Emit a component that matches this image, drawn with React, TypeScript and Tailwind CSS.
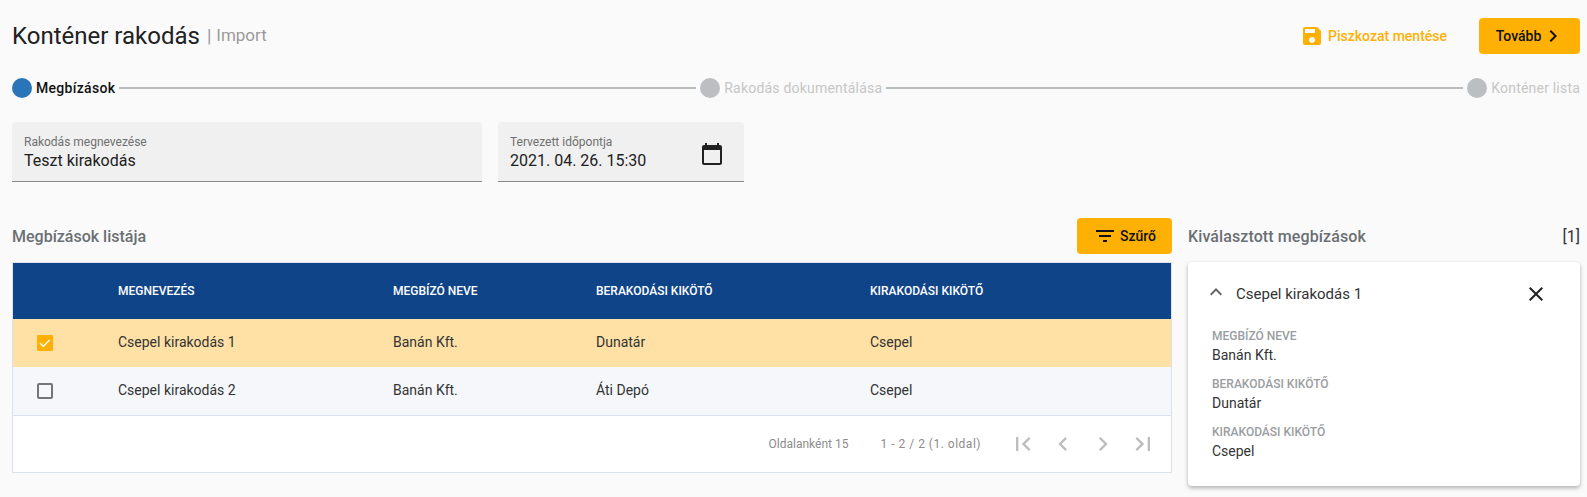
import type { ReactNode } from 'react';

const rows = [
  { name: 'Csepel kirakodás 1', client: 'Banán Kft.', from: 'Dunatár', to: 'Csepel', selected: true },
  { name: 'Csepel kirakodás 2', client: 'Banán Kft.', from: 'Áti Depó', to: 'Csepel', selected: false },
];

const details = [
  { label: 'Megbízó neve', value: 'Banán Kft.' },
  { label: 'Berakodási kikötő', value: 'Dunatár' },
  { label: 'Kirakodási kikötő', value: 'Csepel' },
];

const pagerIcons = [
  'M18.41 16.59L13.82 12l4.59-4.59L17 6l-6 6 6 6zM6 6h2v12H6z',
  'M15.41 7.41L14 6l-6 6 6 6 1.41-1.41L10.83 12z',
  'M10 6L8.59 7.41 13.17 12l-4.58 4.59L10 18l6-6z',
  'M5.59 7.41L10.18 12l-4.59 4.59L7 18l6-6-6-6zM16 6h2v12h-2z',
];

function Icon({ d, className }: { d: string; className: string }) {
  return (
    <svg viewBox="0 0 24 24" fill="currentColor" className={className}>
      <path d={d} />
    </svg>
  );
}

function Field({ label, value, className, children }: { label: string; value: string; className: string; children?: ReactNode }) {
  return (
    <div className={`flex h-[60px] items-center justify-between rounded-t border-b border-[#8a8a8a] bg-[#f0f0f0] pl-3 pr-5 ${className}`}>
      <div className="pt-1">
        <div className="text-xs leading-[15px] text-[#6f6f6f]">{label}</div>
        <div className="text-base leading-[22px] text-[#212121]">{value}</div>
      </div>
      {children}
    </div>
  );
}

function Step({ label, active }: { label: string; active?: boolean }) {
  return (
    <div className="flex items-center gap-1">
      <span className={`h-5 w-5 rounded-full ${active ? 'bg-[#2a75b8]' : 'bg-[#bbbfc2]'}`} />
      <span className={`text-sm ${active ? 'font-medium tracking-[0.3px] text-[#111111]' : 'tracking-[0.2px] text-[#c6c6c6]'}`}>{label}</span>
    </div>
  );
}

export default function App() {
  return (
    <div className="h-[497px] overflow-hidden bg-[#fafafa] pl-3 pr-[7px] font-['Roboto',sans-serif]">
      <div className="flex h-[72px] items-start justify-between pt-[18px]">
        <div className="flex h-9 items-center">
          <h1 className="text-2xl text-[#212121]">Konténer rakodás</h1>
          <span className="ml-[7px] text-lg text-[#8f9aa3]">|</span>
          <span className="ml-[5px] text-[17px] text-[#9a9a9a]">Import</span>
        </div>
        <div className="flex items-center">
          <button className="flex items-center gap-1 text-sm font-medium text-[#ffb005]">
            <Icon d="M17 3H5c-1.11 0-2 .9-2 2v14c0 1.1.89 2 2 2h14c1.1 0 2-.9 2-2V7l-4-4zm-5 16c-1.66 0-3-1.34-3-3s1.34-3 3-3 3 1.34 3 3-1.34 3-3 3zm3-10H5V5h10v4z" className="h-6 w-6" />
            Piszkozat mentése
          </button>
          <button className="ml-8 flex h-9 w-[101px] items-center justify-center rounded bg-[#ffb005] pl-[2px] text-sm font-medium text-[#111111]">
            Tovább
            <Icon d="M10 6L8.59 7.41 13.17 12l-4.58 4.59L10 18l6-6z" className="h-6 w-6" />
          </button>
        </div>
      </div>

      <div className="flex h-[32px] items-center gap-1">
        <Step label="Megbízások" active />
        <div className="h-[2px] flex-1 bg-[#b8bcbc]" />
        <Step label="Rakodás dokumentálása" />
        <div className="h-[2px] flex-1 bg-[#b8bcbc]" />
        <Step label="Konténer lista" />
      </div>

      <div className="mt-[18px] flex gap-4">
        <Field label="Rakodás megnevezése" value="Teszt kirakodás" className="w-[470px]" />
        <Field label="Tervezett időpontja" value="2021. 04. 26. 15:30" className="w-[246px]">
          <Icon d="M20 3h-1V1h-2v2H7V1H5v2H4c-1.1 0-2 .9-2 2v16c0 1.1.9 2 2 2h16c1.1 0 2-.9 2-2V5c0-1.1-.9-2-2-2zm0 18H4V8h16v13z" className="mt-[5px] h-6 w-6 text-[#212121]" />
        </Field>
      </div>

      <div className="mt-9 flex gap-4">
        <div className="w-[1160px]">
          <div className="flex h-9 items-center justify-between">
            <h2 className="pt-[2px] text-base font-medium text-[#6a6f73]">Megbízások listája</h2>
            <button className="flex h-9 w-[95px] items-center justify-center gap-[3px] rounded bg-[#ffb005] text-sm font-medium text-[#111111]">
              <Icon d="M10 18h4v-2h-4v2zM3 6v2h18V6H3zm3 7h12v-2H6v2z" className="h-6 w-6" />
              Szűrő
            </button>
          </div>
          <div className="mt-2 border border-[#dbe2ee] bg-white">
            <div className="grid h-[56px] grid-cols-[105px_275px_203px_274px_1fr] items-center bg-[#0f4489] text-xs font-medium uppercase text-white">
              <div />
              <div>Megnevezés</div>
              <div>Megbízó neve</div>
              <div>Berakodási kikötő</div>
              <div>Kirakodási kikötő</div>
            </div>
            {rows.map((row) => (
              <div
                key={row.name}
                className={`grid grid-cols-[105px_275px_203px_274px_1fr] items-center pb-[2px] text-sm text-[#333333] ${row.selected ? 'h-[48px] bg-[#ffe1a6]' : 'h-[49px] border-b border-[#dbe2ee] bg-[#f5f7fb]'}`}
              >
                <div className="mt-[2px] pl-6">
                  {row.selected ? (
                    <span className="flex h-4 w-4 items-center justify-center rounded-[1px] bg-[#ffb005]">
                      <svg viewBox="0 0 16 16" fill="none" stroke="white" strokeWidth="1.4" className="h-4 w-4">
                        <path d="M3 8.2l3.3 3L12.6 5" />
                      </svg>
                    </span>
                  ) : (
                    <span className="block h-4 w-4 rounded-[2px] border-2 border-[#757575]" />
                  )}
                </div>
                <div>{row.name}</div>
                <div>{row.client}</div>
                <div>{row.from}</div>
                <div>{row.to}</div>
              </div>
            ))}
            <div className="flex h-[56px] items-center justify-end pr-[14px] text-xs text-[#8c8c8c]">
              <span>Oldalanként 15</span>
              <span className="ml-8 tracking-[0.5px]">1 - 2 / 2 (1. oldal)</span>
              <div className="ml-7 flex gap-3 text-[#bdbdbd]">
                {pagerIcons.map((d) => (
                  <Icon key={d} d={d} className="h-7 w-7" />
                ))}
              </div>
            </div>
          </div>
        </div>

        <div className="flex-1">
          <div className="flex h-9 items-center justify-between pt-[2px]">
            <h2 className="text-base font-medium tracking-[0.1px] text-[#6a6f73]">Kiválasztott megbízások</h2>
            <span className="text-base text-[#333333]">[1]</span>
          </div>
          <div className="mt-2 h-[224px] rounded bg-white px-6 shadow-[0_2px_4px_rgba(0,0,0,0.3)]">
            <div className="flex h-[62px] items-center justify-between pr-[8px] pt-[2px]">
              <div className="flex items-center gap-2 text-[#333333]">
                <Icon d="M12 8l-6 6 1.41 1.41L12 10.83l4.59 4.58L18 14z" className="-ml-2 -mt-1 h-6 w-6 text-[#666666]" />
                <span className="text-[15px]">Csepel kirakodás 1</span>
              </div>
              <Icon d="M19 6.41L17.59 5 12 10.59 6.41 5 5 6.41 10.59 12 5 17.59 6.41 19 12 13.41 17.59 19 19 17.59 13.41 12z" className="h-6 w-6 text-[#212121]" />
            </div>
            <div className="mt-[2px] flex flex-col gap-[9px]">
              {details.map((item) => (
                <div key={item.label}>
                  <div className="text-xs font-medium uppercase leading-[20px] text-[#9a9da1]">{item.label}</div>
                  <div className="-mt-px text-sm leading-[20px] text-[#333333]">{item.value}</div>
                </div>
              ))}
            </div>
          </div>
        </div>
      </div>
    </div>
  );
}
